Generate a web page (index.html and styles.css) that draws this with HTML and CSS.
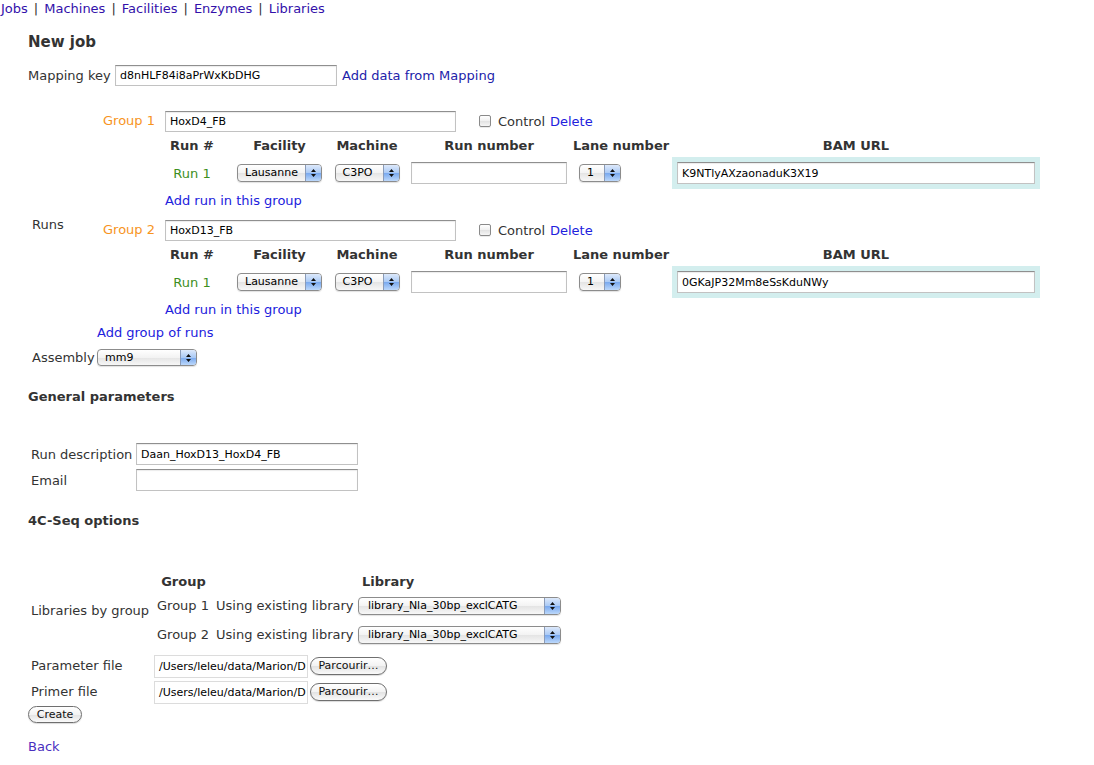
FILE: index.html
```html
<!DOCTYPE html>
<html>
<head>
<meta charset="utf-8">
<title>New job</title>
<link rel="stylesheet" href="styles.css">
</head>
<body>
<nav class="topnav"><a href="#">Jobs</a><span class="sep">|</span><a href="#">Machines</a><span class="sep">|</span><a href="#">Facilities</a><span class="sep">|</span><a href="#">Enzymes</a><span class="sep">|</span><a href="#">Libraries</a></nav>
<main class="content">
  <h1 class="title">New job</h1>
  <div class="mapping-row">
    <span class="mapping-label">Mapping key</span>
    <input class="txt mapping-input" type="text" value="d8nHLF84i8aPrWxKbDHG">
    <a class="link-dark mapping-link" href="#">Add data from Mapping</a>
  </div>

  <div class="runs-row">
    <div class="runs-label">Runs</div>
    <div class="runs-body">
      <div class="group">
        <div class="group-name">Group 1</div>
        <div class="group-head">
          <input class="txt group-input" type="text" value="HoxD4_FB">
          <span class="chk"></span>
          <span class="chk-label">Control</span>
          <a class="link-js delete" href="#">Delete</a>
        </div>
        <div></div>
        <div class="run-table">
          <div class="th c1">Run #</div>
          <div class="th c2">Facility</div>
          <div class="th c3">Machine</div>
          <div class="th c4">Run number</div>
          <div class="th c5">Lane number</div>
          <div class="th c6">BAM URL</div>
          <div class="td c1 run-name">Run 1</div>
          <div class="td c2"><span class="sel sel-fac"><span class="sel-text">Lausanne</span><span class="sel-btn"><svg width="7" height="10" viewBox="0 0 7 10"><path d="M3.5 1 L6 4 H1 Z M3.5 9 L6 6 H1 Z" fill="#111"/></svg></span></span></div>
          <div class="td c3"><span class="sel sel-mach"><span class="sel-text">C3PO</span><span class="sel-btn"><svg width="7" height="10" viewBox="0 0 7 10"><path d="M3.5 1 L6 4 H1 Z M3.5 9 L6 6 H1 Z" fill="#111"/></svg></span></span></div>
          <div class="td c4"><input class="txt runnum-input" type="text" value=""></div>
          <div class="td c5 lane"><span class="sel sel-lane"><span class="sel-text">1</span><span class="sel-btn"><svg width="7" height="10" viewBox="0 0 7 10"><path d="M3.5 1 L6 4 H1 Z M3.5 9 L6 6 H1 Z" fill="#111"/></svg></span></span></div>
          <div class="td c6"><div class="bam-box"><input class="txt bam-input" type="text" value="K9NTlyAXzaonaduK3X19"></div></div>
        </div>
        <div></div>
        <a class="link-js add-run" href="#">Add run in this group</a>
      </div>

      <div class="group">
        <div class="group-name">Group 2</div>
        <div class="group-head">
          <input class="txt group-input" type="text" value="HoxD13_FB">
          <span class="chk"></span>
          <span class="chk-label">Control</span>
          <a class="link-js delete" href="#">Delete</a>
        </div>
        <div></div>
        <div class="run-table">
          <div class="th c1">Run #</div>
          <div class="th c2">Facility</div>
          <div class="th c3">Machine</div>
          <div class="th c4">Run number</div>
          <div class="th c5">Lane number</div>
          <div class="th c6">BAM URL</div>
          <div class="td c1 run-name">Run 1</div>
          <div class="td c2"><span class="sel sel-fac"><span class="sel-text">Lausanne</span><span class="sel-btn"><svg width="7" height="10" viewBox="0 0 7 10"><path d="M3.5 1 L6 4 H1 Z M3.5 9 L6 6 H1 Z" fill="#111"/></svg></span></span></div>
          <div class="td c3"><span class="sel sel-mach"><span class="sel-text">C3PO</span><span class="sel-btn"><svg width="7" height="10" viewBox="0 0 7 10"><path d="M3.5 1 L6 4 H1 Z M3.5 9 L6 6 H1 Z" fill="#111"/></svg></span></span></div>
          <div class="td c4"><input class="txt runnum-input" type="text" value=""></div>
          <div class="td c5 lane"><span class="sel sel-lane"><span class="sel-text">1</span><span class="sel-btn"><svg width="7" height="10" viewBox="0 0 7 10"><path d="M3.5 1 L6 4 H1 Z M3.5 9 L6 6 H1 Z" fill="#111"/></svg></span></span></div>
          <div class="td c6"><div class="bam-box"><input class="txt bam-input" type="text" value="0GKaJP32Mm8eSsKduNWy"></div></div>
        </div>
        <div></div>
        <a class="link-js add-run" href="#">Add run in this group</a>
      </div>

      <a class="link-js add-group" href="#">Add group of runs</a>
    </div>
  </div>

  <div class="assembly-row">
    <span class="assembly-label">Assembly</span>
    <span class="sel sel-asm"><span class="sel-text">mm9</span><span class="sel-btn"><svg width="7" height="10" viewBox="0 0 7 10"><path d="M3.5 1 L6 4 H1 Z M3.5 9 L6 6 H1 Z" fill="#111"/></svg></span></span>
  </div>

  <h2 class="section">General parameters</h2>
  <div class="param-grid">
    <span class="plabel">Run description</span>
    <input class="txt param-input" type="text" value="Daan_HoxD13_HoxD4_FB">
    <span class="plabel">Email</span>
    <input class="txt param-input" type="text" value="">
  </div>

  <h2 class="section seq-title">4C-Seq options</h2>
  <div class="seq-grid">
    <span class="plabel lib-label">Libraries by group</span>
    <div class="lib-table">
      <div class="lth lth-group">Group</div>
      <div class="lth lth-lib">Library</div>
      <div class="lcell">Group 1</div>
      <div class="lcell lcell-using">Using existing library</div>
      <div class="lcell lcell-sel"><span class="sel sel-lib"><span class="sel-text">library_Nla_30bp_exclCATG</span><span class="sel-btn"><svg width="7" height="10" viewBox="0 0 7 10"><path d="M3.5 1 L6 4 H1 Z M3.5 9 L6 6 H1 Z" fill="#111"/></svg></span></span></div>
      <div class="lcell">Group 2</div>
      <div class="lcell lcell-using">Using existing library</div>
      <div class="lcell lcell-sel"><span class="sel sel-lib"><span class="sel-text">library_Nla_30bp_exclCATG</span><span class="sel-btn"><svg width="7" height="10" viewBox="0 0 7 10"><path d="M3.5 1 L6 4 H1 Z M3.5 9 L6 6 H1 Z" fill="#111"/></svg></span></span></div>
    </div>
    <span class="plabel file-row first-file">Parameter file</span>
    <div class="file-field first-file"><span class="file-box">/Users/leleu/data/Marion/D</span><button class="pill" type="button">Parcourir…</button></div>
    <span class="plabel file-row">Primer file</span>
    <div class="file-field"><span class="file-box">/Users/leleu/data/Marion/D</span><button class="pill" type="button">Parcourir…</button></div>
  </div>
  <button class="pill create" type="button">Create</button>
  <a class="back" href="#">Back</a>
</main>
</body>
</html>
```

FILE: styles.css
```css
body {
  margin: 0;
  background: #fff;
  color: #333;
  font-family: "DejaVu Sans", Verdana, sans-serif;
  font-size: 13px;
}

a { text-decoration: none; }

.topnav {
  height: 17px;
  line-height: 16px;
  padding-top: 1px;
  box-sizing: border-box;
  padding-left: 1px;
  color: #333;
}
.topnav a { color: #3311aa; }
.topnav .sep { padding: 0 6px 0 6px; }

.content { padding-left: 28px; }

.title {
  margin: 0;
  padding-top: 16px;
  font-size: 15px;
  line-height: 18px;
  font-weight: bold;
  color: #333;
}

/* text fields */
.txt {
  box-sizing: border-box;
  margin: 0;
  padding: 0 4px;
  border: 1px solid #c2c2c2;
  border-top-color: #8f8f8f;
  background: #fff;
  box-shadow: inset 0 1px 1px rgba(0, 0, 0, 0.08);
  font-family: "DejaVu Sans", Verdana, sans-serif;
  font-size: 11px;
  color: #000;
  outline: none;
}

.mapping-row {
  display: flex;
  align-items: center;
  height: 22px;
  margin-top: 13px;
}
.mapping-label { width: 87px; }
.mapping-input { width: 222px; height: 21px; }
.mapping-link { margin-left: 5px; }
.link-dark { color: #2222aa; }
.link-js { color: #2121dd; }

/* runs */
.runs-row {
  display: flex;
  margin-top: 23px;
}
.runs-label {
  width: 65px;
  padding-left: 4px;
  padding-bottom: 4px;
  align-self: center;
}
.runs-body {
  display: flex;
  flex-direction: column;
}
.group {
  display: grid;
  grid-template-columns: 68px auto;
}
.group + .group { margin-top: 6px; }
.group-name {
  padding-left: 6px;
  height: 24px;
  line-height: 24px;
  color: #f7941d;
}
.group-head {
  display: flex;
  align-items: center;
  height: 24px;
}
.group-input { width: 291px; height: 21px; }
.chk {
  box-sizing: border-box;
  width: 12px;
  height: 12px;
  margin-left: 23px;
  border: 1px solid #8a8a8a;
  border-radius: 2px;
  background: linear-gradient(#ffffff, #f0f0f0 50%, #e2e2e2 51%, #f6f6f6);
  box-shadow: 0 1px 0 rgba(0, 0, 0, 0.08);
}
.chk-label { margin-left: 7px; }
.delete { margin-left: 5px; }

.run-table {
  display: grid;
  grid-template-columns: 54px 114px 75px 162px 102px 368px;
  grid-template-rows: 24px 32px;
  align-items: center;
}
.th {
  font-weight: bold;
  text-align: center;
  color: #333;
  white-space: nowrap;
}
.td {
  display: flex;
  justify-content: center;
  align-items: center;
}
.c2 { padding-left: 7px; }
.c3 { padding-right: 7px; }
.td.lane { justify-content: flex-start; padding-left: 9px; }
.run-name { color: #3d8f1d; }
.runnum-input { width: 156px; height: 22px; }
.bam-box {
  box-sizing: border-box;
  width: 368px;
  height: 32px;
  padding: 5px;
  background: #d3eeee;
}
.bam-input { width: 358px; height: 22px; }

.add-run {
  height: 23px;
  line-height: 24px;
  justify-self: start;
}
.add-group {
  margin-top: 1px;
  line-height: 21px;
  align-self: flex-start;
}

/* select look-alike */
.sel {
  box-sizing: border-box;
  display: inline-flex;
  align-items: stretch;
  height: 18px;
  border: 1px solid #8c8c8c;
  border-radius: 4px;
  overflow: hidden;
  background: linear-gradient(#ffffff, #f3f3f3 50%, #e4e4e4 51%, #f7f7f7);
  box-shadow: 0 1px 1px rgba(0, 0, 0, 0.12);
  font-size: 11px;
  line-height: 16px;
  color: #000;
}
.sel-text {
  flex: 1;
  padding-left: 7px;
  white-space: nowrap;
  overflow: hidden;
}
.sel-btn {
  width: 15px;
  flex: none;
  display: flex;
  align-items: center;
  justify-content: center;
  border-left: 1px solid #8a9bb8;
  background: linear-gradient(#dde9fb, #a9c9f5 50%, #78a8ee 51%, #bcd8fb);
}
.sel-fac { width: 85px; }
.sel-mach { width: 65px; }
.sel-lane { width: 42px; }
.sel-asm { width: 100px; height: 17px; }
.sel-lib { width: 203px; }
.sel-lib .sel-text { padding-left: 9px; }

.assembly-row {
  display: flex;
  align-items: center;
  height: 21px;
  margin-top: 4px;
}
.assembly-label { width: 65px; padding-left: 4px; }

/* sections */
.section {
  margin: 21px 0 0;
  font-size: 13px;
  line-height: 16px;
  font-weight: bold;
  color: #333;
}
.seq-title { margin-top: 20px; }

.param-grid {
  display: grid;
  grid-template-columns: 108px 222px;
  grid-auto-rows: 26px;
  align-items: center;
  margin-top: 36px;
}
.plabel { padding-left: 3px; white-space: nowrap; }
.param-input { width: 222px; height: 22px; }

.seq-grid {
  display: grid;
  grid-template-columns: 126px auto;
  align-items: center;
  margin-top: 42px;
}
.lib-table {
  display: grid;
  grid-template-columns: 59px 143px 207px;
  grid-template-rows: 20px 29px 29px;
  align-items: center;
}
.lth {
  font-weight: bold;
  text-align: center;
  white-space: nowrap;
}
.lth-lib { grid-column: 2 / 4; text-align: left; padding-left: 149px; }
.lcell { padding-left: 3px; white-space: nowrap; }
.lcell-sel { padding-left: 2px; display: flex; }

.file-row { height: 26px; line-height: 26px; }
.first-file { margin-top: 4px; }
.file-field {
  display: flex;
  align-items: center;
  height: 26px;
}
.file-box {
  box-sizing: border-box;
  display: block;
  width: 154px;
  height: 23px;
  line-height: 21px;
  padding-left: 4px;
  border: 1px solid #dcdcdc;
  font-size: 11px;
  color: #000;
  white-space: nowrap;
  overflow: hidden;
}

.pill {
  box-sizing: border-box;
  margin: 0 0 0 2px;
  height: 18px;
  width: 77px;
  padding: 0;
  border: 1px solid #6f6f6f;
  border-radius: 9px;
  background: linear-gradient(#ffffff, #f2f2f2 50%, #e2e2e2 51%, #fafafa);
  box-shadow: 0 1px 1px rgba(0, 0, 0, 0.15);
  font-family: "DejaVu Sans", Verdana, sans-serif;
  font-size: 11px;
  line-height: 16px;
  color: #111;
}
.create {
  display: block;
  margin: 1px 0 0 0;
  width: 54px;
  height: 17px;
}

.back {
  display: block;
  width: max-content;
  margin-top: 16px;
  line-height: 16px;
  color: #4a2fbf;
}
```
